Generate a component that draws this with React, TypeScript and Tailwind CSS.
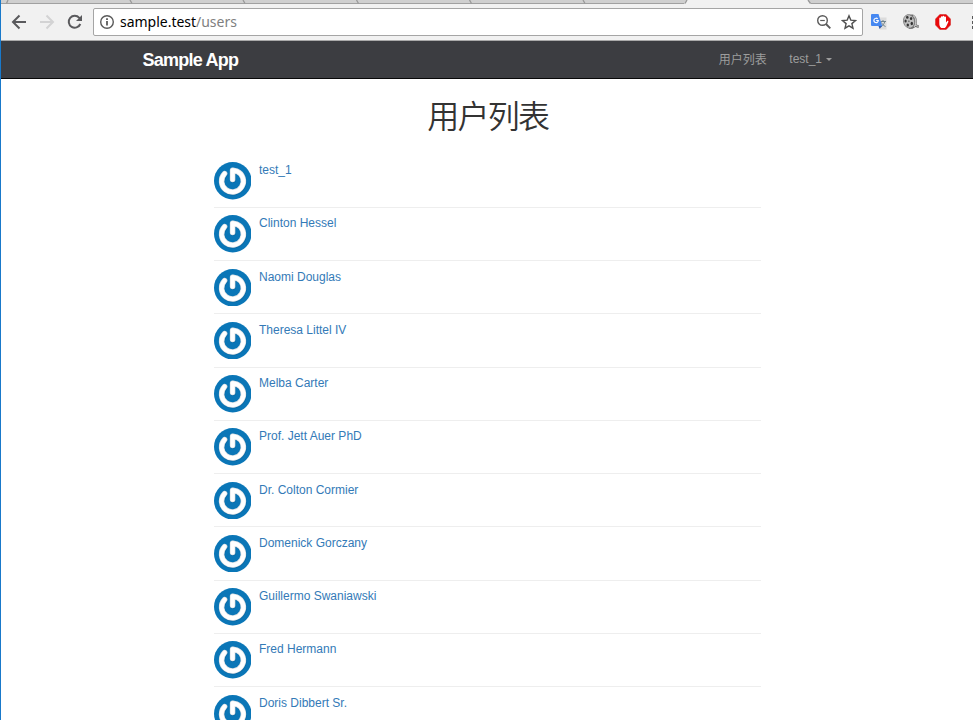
const users = [
  'test_1',
  'Clinton Hessel',
  'Naomi Douglas',
  'Theresa Littel IV',
  'Melba Carter',
  'Prof. Jett Auer PhD',
  'Dr. Colton Cormier',
  'Domenick Gorczany',
  'Guillermo Swaniawski',
  'Fred Hermann',
  'Doris Dibbert Sr.',
];

function TabStrip() {
  return (
    <svg className="block h-1 w-full shrink-0" viewBox="0 0 973 4" preserveAspectRatio="none">
      <rect width="973" height="4" fill="#cfcfcf" />
      <rect y="3" width="973" height="1" fill="#a0a0a0" />
      <path d="M684 4 L687 0 H808 L811 4 Z" fill="#f1f1f1" />
      <path
        d="M8 0L6.500 3.500M130 0L132 3.500M243 0L245 3.500M356.500 0L358.500 3.500M469.500 0L471.500 3.500M583 0L585 3.500M687 0L685 3.500M808 0L810.500 3.500"
        stroke="#999"
        strokeWidth="1.300"
        fill="none"
      />
    </svg>
  );
}

function BackIcon() {
  return (
    <svg className="h-4 w-4" viewBox="0 0 16 16" fill="none" stroke="#5a5a5d" strokeWidth="2">
      <path d="M15 8H2.500M8.500 1.500L2 8l6.500 6.500" />
    </svg>
  );
}

function ForwardIcon() {
  return (
    <svg className="h-4 w-4" viewBox="0 0 16 16" fill="none" stroke="#d3d3d4" strokeWidth="2">
      <path d="M1 8h12.500M7.500 1.500L14 8l-6.500 6.500" />
    </svg>
  );
}

function ReloadIcon() {
  return (
    <svg className="h-4 w-4" viewBox="0 0 16 16">
      <path d="M13.300 10A6 6 0 1 1 12.300 3.800L13.500 5" fill="none" stroke="#5a5a5d" strokeWidth="2" />
      <path d="M15 1v6H9z" fill="#5a5a5d" />
    </svg>
  );
}

function InfoIcon() {
  return (
    <svg className="h-4 w-4" viewBox="0 0 16 16">
      <circle cx="8" cy="8" r="6.300" fill="none" stroke="#5a5a5a" strokeWidth="1.400" />
      <path d="M7.100 7h1.800v4.500H7.100zM7.100 4.300h1.800v1.700H7.100z" fill="#5a5a5a" />
    </svg>
  );
}

function ZoomOutIcon() {
  return (
    <svg className="h-4 w-4" viewBox="0 0 16 16" fill="none" stroke="#5a5a5a">
      <circle cx="6.500" cy="6.500" r="4.800" strokeWidth="1.400" />
      <path d="M4.200 6.500h4.600" strokeWidth="1.200" />
      <path d="M10 10l4.300 4.300" strokeWidth="1.900" />
    </svg>
  );
}

function StarIcon() {
  return (
    <svg className="h-4 w-4" viewBox="0 0 16 16">
      <path
        d="M8 1.800l1.800 4.300 4.700.4-3.600 3.100 1.100 4.600L8 11.800l-4 2.400 1.100-4.600L1.500 6.500l4.700-.4z"
        fill="none"
        stroke="#505050"
        strokeWidth="1.400"
      />
    </svg>
  );
}

function TranslateIcon() {
  return (
    <svg className="h-4 w-4" viewBox="0 0 16 16">
      <path d="M6 3.500h9.500v12H9z" fill="#dcdcdc" />
      <path d="M9.500 7.500h5.500M12 6v1.500M13.800 7.500c-.5 2.500-2 4-4 5M10.500 8.500c.8 1.800 2 3 4 4" stroke="#71858e" fill="none" />
      <path d="M1 0h6.500l3.700 12H1a1 1 0 0 1-1-1V1a1 1 0 0 1 1-1z" fill="#4688f1" />
      <path d="M7.500 12h3.700L8.600 15z" fill="#315cad" />
      <path d="M6.700 4.900A2.200 2.200 0 1 0 7.300 6.500H5.200" fill="none" stroke="#fff" strokeWidth="1.200" />
    </svg>
  );
}

function FilmReelIcon() {
  return (
    <svg className="h-4 w-4" viewBox="0 0 16 16">
      <path d="M4 .8L9.500.5c3 .7 4.500 3.500 4.300 7.500l-.3 2.500 2.500 1-.5 2.500-3-1-3 1.800-3.500.2z" fill="#6c6c6c" />
      <path d="M10.300 1.500c3.200 2.500 3.200 8 .8 11.500" fill="none" stroke="#c8c8c8" strokeWidth="1.200" />
      <ellipse cx="6" cy="7.400" rx="5.500" ry="6.800" fill="#c0c0c0" stroke="#747474" strokeWidth=".7" transform="rotate(-15 6 7.400)" />
      <g fill="#333">
        <ellipse cx="4.300" cy="3.400" rx="1.300" ry="1.400" />
        <ellipse cx="8.100" cy="4.500" rx="1.200" ry="1.500" />
        <ellipse cx="2.600" cy="7.100" rx="1.100" ry="1.500" />
        <ellipse cx="4.800" cy="11" rx="1.200" ry="1.500" />
        <ellipse cx="8.800" cy="9.500" rx="1.200" ry="1.700" />
        <circle cx="5.900" cy="7.200" r=".6" />
      </g>
      <path d="M12 11.200l3.300 1.200" stroke="#ddd" strokeWidth=".8" />
    </svg>
  );
}

function BlockIcon() {
  return (
    <svg className="h-4 w-4" viewBox="0 0 16 16">
      <path d="M4.800.5h6.400l4.300 4.500v6l-4.300 4.500H4.800L.5 11V5z" fill="#e9080b" stroke="#d0201f" strokeWidth=".5" />
      <path
        d="M4.300 9V4.400a.8.8 0 0 1 1.600 0V3a.8.8 0 0 1 1.700 0v-.4a.8.8 0 0 1 1.700 0v.7a.8.8 0 0 1 1.700 0V8.500l1-1.300c.6-.8 1.700-.2 1.300.7l-2.100 4.600-1.300 1.500H6.200C4.600 12.800 4.300 11 4.300 9z"
        fill="#fff"
      />
    </svg>
  );
}

function Toolbar() {
  return (
    <div className="flex h-[37px] shrink-0 items-start border-b border-[#aaa] bg-[#f1f1f1] pt-1">
      <div className="flex h-7 w-[93px] shrink-0 items-center gap-3 pl-[11px]">
        <BackIcon />
        <ForwardIcon />
        <ReloadIcon />
      </div>
      <div className="flex h-7 w-[770px] shrink-0 items-center rounded-[2px] border border-[#a5a5a5] bg-white pl-[5px] pr-[5px]">
        <InfoIcon />
        <span className="ml-[5px] flex-1 font-['Noto_Sans','Open_Sans',sans-serif] text-[14px] leading-5 tracking-[-0.02px] text-black">
          sample.test<span className="text-[#808080]">/users</span>
        </span>
        <div className="flex gap-[9px]">
          <ZoomOutIcon />
          <StarIcon />
        </div>
      </div>
      <div className="flex h-7 flex-1 items-center gap-4 overflow-hidden pl-2">
        <div className="shrink-0"><TranslateIcon /></div>
        <div className="shrink-0"><FilmReelIcon /></div>
        <div className="shrink-0"><BlockIcon /></div>
        <div className="ml-[5px] flex shrink-0 flex-col gap-0.5">
          <i className="h-[3px] w-[3px] bg-[#5a5a5a]" />
          <i className="h-[3px] w-[3px] bg-[#5a5a5a]" />
          <i className="h-[3px] w-[3px] bg-[#5a5a5a]" />
        </div>
      </div>
    </div>
  );
}

function Navbar() {
  return (
    <nav className="flex h-[38px] shrink-0 items-center border-b border-[#080808] bg-[#3c3d41] pl-[142.5px] pr-[141px]">
      <span className="text-[18px] font-bold leading-5 tracking-[-0.75px] text-white">Sample App</span>
      <div className="ml-auto flex items-center text-[12px] leading-4 text-[#9d9d9d]">
        <span>用户列表</span>
        <span className="mb-0.5 ml-[22.5px]">test_1</span>
        <i className="ml-1 border-x-[3px] border-t-[3px] border-x-transparent border-t-[#9d9d9d]" />
      </div>
    </nav>
  );
}

function Avatar() {
  return (
    <svg className="block h-[37.5px] w-[37.5px] shrink-0" viewBox="0 0 37.500 37.500">
      <circle cx="18.750" cy="18.750" r="18.750" fill="#0a76b7" />
      <g fill="none" strokeLinecap="round" strokeLinejoin="round">
        <path
          d="M10.600 11.600A10.900 10.900 0 1 0 23 9.200L18.600 8.200V17.500"
          stroke="#06568a"
          strokeOpacity=".4"
          strokeWidth="5.600"
          transform="translate(.5 .6)"
        />
        <path d="M10.600 11.600A10.900 10.900 0 1 0 23 9.200L18.600 8.200V17.500" stroke="#dfe3e6" strokeWidth="5.500" />
        <path d="M10.600 11.600A10.900 10.900 0 1 0 23 9.200L18.600 8.200V17.500" stroke="#fff" strokeWidth="4" />
      </g>
    </svg>
  );
}

export default function App() {
  return (
    <div className="relative flex h-[720px] w-[973px] flex-col overflow-hidden bg-white font-['Liberation_Sans','Noto_Sans_CJK_SC',sans-serif]">
      <TabStrip />
      <Toolbar />
      <Navbar />
      <main className="flex flex-col pl-[213.5px]">
        <h1 className="mt-[19px] h-[38px] w-[548.5px] text-center text-[32px] font-[350] leading-[38px] tracking-[-1.7px] text-[#333]">
          用户列表
        </h1>
        <ul className="mt-[18.5px] w-[547.5px]">
          {users.map((name) => (
            <li key={name} className="flex h-[53.25px] items-start gap-2 border-b border-[#eee] pt-[7.5px]">
              <Avatar />
              <a className="text-[12px] leading-[17px] text-[#337ab7]">{name}</a>
            </li>
          ))}
        </ul>
      </main>
      <div className="absolute inset-y-0 left-0 w-px bg-[#1979ca]" />
    </div>
  );
}
